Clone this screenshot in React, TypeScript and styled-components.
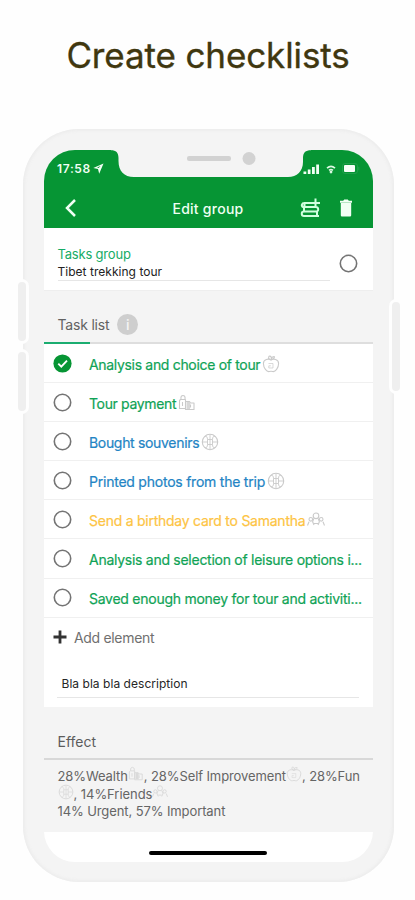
import React from "react";
import styled, { createGlobalStyle } from "styled-components";

const GlobalStyle = createGlobalStyle`
  * { box-sizing: border-box; }
  body { margin: 0; background: #fefefe; font-family: Inter, "Liberation Sans", sans-serif; }
`;

const Page = styled.main`
  width: 415px;
  height: 900px;
  overflow: hidden;
  background: #fefefe;
`;

const Title = styled.h1`
  margin: 0;
  height: 129px;
  padding: 33px 0 0 1px;
  text-align: center;
  font-size: 35px;
  line-height: 44px;
  font-weight: 400;
  letter-spacing: -0.12px;
  -webkit-text-stroke: 0.35px #40370f;
  color: #40370f;
`;

const Phone = styled.div`
  position: relative;
  width: 371px;
  height: 753px;
  margin-left: 23px;
  padding: 21px 21px 20px 21px;
  border-radius: 56px;
  background: #f4f4f4;
  box-shadow: inset 0 0 3px 2px #ededed;
`;

const SideButton = styled.div<{ $left: number; $top: number; $height: number }>`
  position: absolute;
  left: ${(p) => p.$left}px;
  top: ${(p) => p.$top}px;
  width: 14px;
  height: ${(p) => p.$height}px;
  border: 3px solid #fefefe;
  border-radius: 7px;
  background: #efefef;
`;

const Screen = styled.div`
  position: relative;
  width: 329px;
  height: 712px;
  overflow: hidden;
  border-radius: 31px;
  background: #fff;
  display: flex;
  flex-direction: column;
`;

const NotchArt = styled.svg`
  position: absolute;
  left: 74px;
  top: 0;
  overflow: visible;
`;

const StatusBar = styled.div`
  height: 37px;
  flex: none;
  padding: 0 13px;
  background: #069534;
  color: #f2fff5;
  display: flex;
  align-items: center;
  justify-content: space-between;
  font-size: 12px;
  font-weight: 600;
  letter-spacing: 0.65px;
`;

const StatusGroup = styled.div<{ $gap: number }>`
  display: flex;
  align-items: center;
  gap: ${(p) => p.$gap}px;
`;

const NavBar = styled.header`
  height: 41px;
  flex: none;
  padding: 0 20px 0 19px;
  background: #069534;
  color: #effff3;
  display: grid;
  grid-template-columns: 60px 1fr 60px;
  align-items: center;
`;

const NavTitle = styled.div`
  text-align: center;
  font-size: 14px;
  font-weight: 500;
  letter-spacing: 0.25px;
  padding-top: 2px;
`;

const NavActions = styled.div`
  display: flex;
  justify-content: flex-end;
  align-items: center;
  gap: 18px;
`;

const GroupPanel = styled.section`
  height: 63px;
  flex: none;
  padding: 17px 15px 9px 13.5px;
  display: flex;
  align-items: center;
  gap: 9px;
  border-bottom: 1px solid #eeeeee;
`;

const GroupField = styled.div`
  width: 273px;
  height: 36px;
  border-bottom: 1px solid #e6e6e6;
`;

const FieldLabel = styled.div`
  color: #16ac66;
  font-size: 13px;
  line-height: 18px;
  letter-spacing: -0.2px;
`;

const FieldValue = styled.div`
  color: #222;
  font-size: 12px;
  line-height: 17px;
  letter-spacing: 0.03px;
`;

const SectionHead = styled.div`
  height: 51px;
  flex: none;
  padding: 16px 13.5px 0;
  display: flex;
  align-items: center;
  gap: 8px;
  background: #f4f4f4;
  color: #626262;
  font-size: 14px;
  letter-spacing: -0.2px;
`;

const InfoBadge = styled.span`
  width: 21px;
  height: 21px;
  border-radius: 50%;
  background: #cecece;
  color: #f4f4f4;
  display: grid;
  place-items: center;
  font-size: 14px;
  font-weight: 500;
  letter-spacing: 0;
`;

const Progress = styled.div`
  height: 2px;
  flex: none;
  background: #dedede;
`;

const ProgressFill = styled.div`
  width: 46px;
  height: 2px;
  background: #1bad70;
`;

const TaskRow = styled.div`
  height: 39.1px;
  flex: none;
  padding: 0 10px 0 9px;
  display: flex;
  align-items: center;
  border-bottom: 1px solid #f0f0f0;
`;

const TaskText = styled.div<{ $color: string; $spacing: number; $tagged: boolean }>`
  margin-left: 17px;
  padding-top: ${(p) => (p.$tagged ? 3 : 2)}px;
  display: flex;
  align-items: center;
  gap: 2px;
  white-space: nowrap;
  color: ${(p) => p.$color};
  font-size: 14px;
  line-height: 20px;
  letter-spacing: ${(p) => p.$spacing}px;
  -webkit-text-stroke: 0.2px ${(p) => p.$color};

  svg {
    margin-top: -2px;
  }
`;

const AddRow = styled.div`
  height: 39px;
  flex: none;
  padding-left: 9px;
  display: flex;
  align-items: center;
  gap: 7px;
  color: #707070;
  font-size: 14px;
  letter-spacing: -0.32px;
`;

const DescriptionPanel = styled.div`
  height: 50px;
  flex: none;
  padding: 16px 14px 0 13px;
`;

const Description = styled.div`
  height: 25px;
  padding-left: 4.5px;
  border-bottom: 1px solid #e6e6e6;
  color: #262626;
  font-size: 12px;
  line-height: 22px;
  letter-spacing: 0.04px;
`;

const EffectHead = styled.div`
  height: 53px;
  flex: none;
  padding: 19px 13px 0 13.5px;
  border-bottom: 2px solid #d8d8d8;
  background: #f4f4f4;
  color: #5c5c5c;
  font-size: 14px;
  display: flex;
  align-items: center;
`;

const EffectBody = styled.div`
  height: 72px;
  flex: none;
  padding: 7px 0 0 13.5px;
  background: #f4f4f4;
  color: #656565;
  font-size: 13px;
`;

const EffectLine = styled.div<{ $spacing: number; $height: number }>`
  height: ${(p) => p.$height}px;
  display: flex;
  align-items: center;
  white-space: pre;
  letter-spacing: ${(p) => p.$spacing}px;

  svg {
    margin-top: -4px;
  }
`;

const HomeArea = styled.div`
  flex: 1;
  padding: 19px 0 0 105px;
`;

const HomeIndicator = styled.div`
  width: 118px;
  height: 4px;
  border-radius: 2px;
  background: #000;
`;

type Kind = "apple" | "wealth" | "ball" | "people";

function CategoryIcon({ kind, size = 18, faint = false }: { kind: Kind; size?: number; faint?: boolean }) {
  return (
    <svg width={size} height={size} viewBox="0 0 18 18" fill="none" stroke={faint ? "#dadada" : "#cacaca"} strokeWidth="1.1" strokeLinejoin="round">
      {kind === "apple" && (
        <>
          <path d="M9 5.200C7 3.300 1.300 3.900 1.400 8.500c.1 4.500 3.300 8.700 6 8 1-.3 2.200-.3 3.200 0 2.700.7 6-3.500 6-8C16.700 3.900 11 3.300 9 5.200ZM9 5C7 4.500 6 2.500 7 1.300 9 .5 10 3 9 5M9 4c.7-2 2-2.500 3.500-2.300-.2 1.800-1.500 2.600-3.500 2.300" />
          <path d="M6.500 8.500H11v4.500H6.800v-2.200h2" strokeWidth=".7" />
        </>
      )}
      {kind === "wealth" && (
        <>
          <path d="M2.500 5.500h5v9h-6v-8ZM3 5.500C2.500 2 4 1.500 5 1.500s2.500.5 2 4M7.500 7.500h4l1 1.500H16v6.500H7.500ZM10 10.500v3M12.500 10.500v3M4.500 8v4" />
          <path d="M8.500 8h3.500v7H8.500Z" fill={faint ? "#dadada" : "#d8d8d8"} stroke="none" />
        </>
      )}
      {kind === "ball" && (
        <>
          <circle cx="9" cy="9" r="7.700" />
          <path d="M6.500 6.500h5v5h-5ZM6.500 6.500C6.500 4 5.500 3 4 3.200M11.500 6.500C11.500 4 12.500 3 14 3.200M6.500 11.500c0 2.500-1 3.500-2.500 3.300M11.500 11.500c0 2.500 1 3.500 2.500 3.300M1.500 9h5M11.500 9h5M9 1.500v15" strokeWidth=".9" />
        </>
      )}
      {kind === "people" && (
        <>
          <circle cx="9" cy="4.800" r="2.800" />
          <circle cx="3.800" cy="8.300" r="1.800" />
          <circle cx="14.200" cy="8.300" r="1.800" />
          <path d="M.5 14.500 2 10.700M5.500 10.500 7 14M17.500 14.500 16 10.700M12.500 10.500 11 14M6.800 7.500 5.500 11M11.200 7.500 12.500 11M7 12.500h4" />
        </>
      )}
    </svg>
  );
}

function Check({ done = false }: { done?: boolean }) {
  return (
    <svg width="19" height="19" viewBox="0 0 19 19" fill="none">
      {done ? (
        <>
          <circle cx="9.500" cy="9.500" r="9.100" fill="#069534" />
          <path d="m5.300 9.600 3 3 5.700-5.900" stroke="#fff" strokeWidth="1.900" />
        </>
      ) : (
        <circle cx="9.500" cy="9.500" r="8.200" stroke="#747474" strokeWidth="1.600" />
      )}
    </svg>
  );
}

const GREEN = "#0fa356";
const BLUE = "#2384c4";
const AMBER = "#fdc444";

const tasks: { text: string; color: string; spacing: number; icon?: Kind; done?: boolean }[] = [
  { text: "Analysis and choice of tour", color: GREEN, spacing: -0.32, icon: "apple", done: true },
  { text: "Tour payment", color: GREEN, spacing: -0.34, icon: "wealth" },
  { text: "Bought souvenirs", color: BLUE, spacing: -0.32, icon: "ball" },
  { text: "Printed photos from the trip", color: BLUE, spacing: -0.23, icon: "ball" },
  { text: "Send a birthday card to Samantha", color: AMBER, spacing: -0.25, icon: "people" },
  { text: "Analysis and selection of leisure options i...", color: GREEN, spacing: -0.27 },
  { text: "Saved enough money for tour and activiti...", color: GREEN, spacing: -0.26 },
];

export default function App() {
  return (
    <Page>
      <GlobalStyle />
      <Title>Create checklists</Title>
      <Phone>
        <SideButton $left={-8} $top={150} $height={65} />
        <SideButton $left={-8} $top={220} $height={65} />
        <SideButton $left={366} $top={170} $height={95} />
        <Screen>
          <StatusBar>
            <StatusGroup $gap={2}>
              <span>17:58</span>
              <svg width="11" height="11" viewBox="0 0 11 11">
                <path d="M.3 5 10.500.5 6.200 10.800 5 6Z" fill="#f2fff5" />
                <path d="M4 4.600 7.500 3.100 5.600 5Z" fill="#069534" />
              </svg>
            </StatusGroup>
            <StatusGroup $gap={2}>
              <svg width="17" height="10" viewBox="0 0 17 10" fill="#f2fff5">
                <path d="M.5 7.500h2.800V10H.5ZM4.800 5.500h2.700V10H4.800ZM9 3h2.800v7H9ZM13.200.5H16V10h-2.800Z" />
              </svg>
              <svg width="18" height="10" viewBox="0 0 18 10" fill="none" stroke="#dcf9e2" strokeWidth="1.600">
                <path d="M5 4.200c2.500-2.300 5.500-2.300 8 0M7 6.300c1.300-1 2.700-1 4 0" />
                <circle cx="9" cy="8" r=".6" />
              </svg>
              <svg width="18" height="11" viewBox="0 0 18 11">
                <rect x=".5" y=".5" width="15" height="10" rx="2.500" fill="none" stroke="#1f9f4a" />
                <rect x="2" y="2" width="11" height="7" rx="1" fill="#f6fff8" />
                <path d="M16.800 3.800v3.400" stroke="#1f9f4a" strokeWidth="1.200" />
              </svg>
            </StatusGroup>
          </StatusBar>
          <NotchArt width="186" height="28" viewBox="0 0 186 28">
            <path d="M-7-1V.2C-2 .2.500 2.500.500 8v3C.500 21 6 27 16 27h154c9 0 15-6 15-15V8c0-5.500 2.500-7.800 8-7.800V-1Z" fill="#f4f4f4" />
            <rect x="69" y="6" width="44" height="5" rx="2" fill="#d2d2d2" />
            <circle cx="131" cy="8.500" r="6.500" fill="#d2d2d2" />
          </NotchArt>
          <NavBar>
            <svg width="15" height="20" viewBox="0 0 15 20" fill="none">
              <path d="M12 2 4 10l8 8" stroke="#effff3" strokeWidth="2.500" />
            </svg>
            <NavTitle>Edit group</NavTitle>
            <NavActions>
              <svg width="21" height="20" viewBox="0 0 21 20" fill="none" stroke="#d0ffdf" strokeWidth="2">
                <path d="M11 5H4.500C1.500 5 1 8 3.200 9h12.300c3.500 0 3.500 4.500.5 4.500H4c-3 0-3 4.500 0 4.500h15M4.500 5v4M4 13.500V9M17 13.500V18M15.500.5v9M11 5h9" />
              </svg>
              <svg width="14" height="18" viewBox="0 0 14 18" fill="#f2fff4">
                <path d="M1 1.700h3.200L5.200.5h3.600l1 1.200H13v2H1ZM1.800 4H12.200V16c0 1-.6 1.500-1.500 1.500H3.300c-.9 0-1.500-.5-1.500-1.500Z" />
              </svg>
            </NavActions>
          </NavBar>
          <GroupPanel>
            <GroupField>
              <FieldLabel>Tasks group</FieldLabel>
              <FieldValue>Tibet trekking tour</FieldValue>
            </GroupField>
            <Check />
          </GroupPanel>
          <SectionHead>
            <span>Task list</span>
            <InfoBadge>i</InfoBadge>
          </SectionHead>
          <Progress>
            <ProgressFill />
          </Progress>
          {tasks.map((task) => (
            <TaskRow key={task.text}>
              <Check done={task.done} />
              <TaskText $color={task.color} $spacing={task.spacing} $tagged={Boolean(task.icon)}>
                <span>{task.text}</span>
                {task.icon && <CategoryIcon kind={task.icon} />}
              </TaskText>
            </TaskRow>
          ))}
          <AddRow>
            <svg width="14" height="14" viewBox="0 0 14 14">
              <path d="M7 .5v13M.5 7h13" stroke="#333" strokeWidth="2.800" />
            </svg>
            <span>Add element</span>
          </AddRow>
          <DescriptionPanel>
            <Description>Bla bla bla description</Description>
          </DescriptionPanel>
          <EffectHead>Effect</EffectHead>
          <EffectBody>
            <EffectLine $spacing={-0.1} $height={18}>
              28%Wealth<CategoryIcon kind="wealth" size={16} faint />, 28%Self Improvement<CategoryIcon kind="apple" size={16} faint />, 28%Fun
            </EffectLine>
            <EffectLine $spacing={-0.05} $height={18}>
              <CategoryIcon kind="ball" size={16} faint />, 14%Friends<CategoryIcon kind="people" size={16} faint />
            </EffectLine>
            <EffectLine $spacing={-0.1} $height={16}>14% Urgent, 57% Important</EffectLine>
          </EffectBody>
          <HomeArea>
            <HomeIndicator />
          </HomeArea>
        </Screen>
      </Phone>
    </Page>
  );
}
